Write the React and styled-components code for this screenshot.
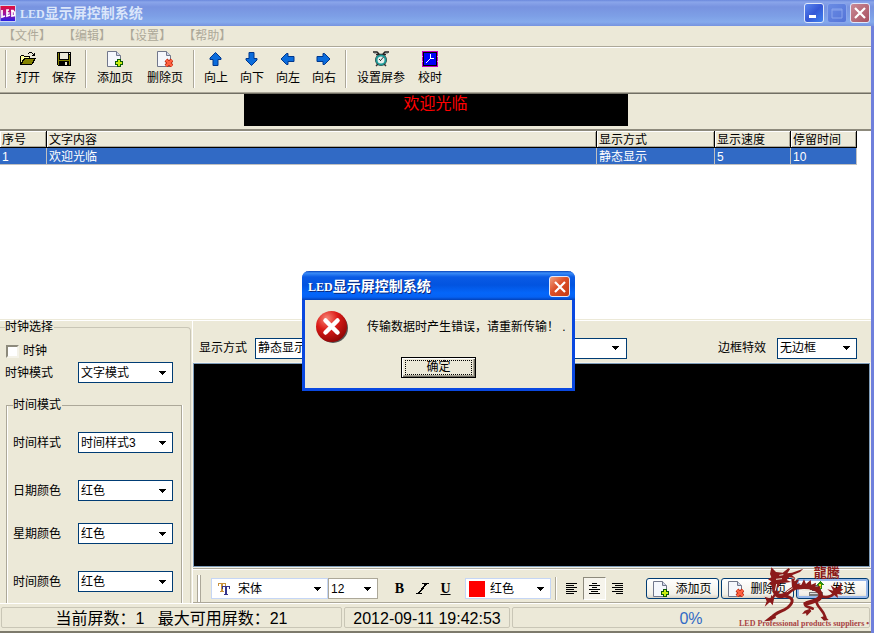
import React from "react";
import styled, { createGlobalStyle } from "styled-components";

const face = "#ece9d8";
const shadow = "#aca899";

const GlobalStyle = createGlobalStyle`
  * {
    box-sizing: border-box;
  }
  body {
    margin: 0;
    background: ${face};
    color: black;
    font: 12px/14px "Liberation Sans", "Noto Sans CJK SC", sans-serif;
  }
  button, select, input {
    font: inherit;
    color: inherit;
    margin: 0;
    padding: 0;
    border-radius: 0;
  }
  button:focus, select:focus {
    outline: none;
  }
`;

const Window = styled.div`
  min-height: 100vh;
  display: flex;
  flex-direction: column;
  position: relative;
`;

const TitleBar = styled.header`
  height: 26px;
  display: flex;
  align-items: center;
  gap: 3px;
  padding-right: 4px;
  background: linear-gradient(#6b88dc, #8aa5ea 2px, #7893e0 7px, #7d9fe6 16px, #85aaec 22px, #7693df);
`;

const Title = styled.h1`
  flex: 1;
  margin: 0;
  font-size: 14px;
  line-height: 20px;
  font-weight: bold;
  color: ${p => p.$color || "#dbe6fa"};
  text-shadow: ${p => (p.$deep ? "1px 1px #0a2a80" : "none")};
`;

const Latin = styled.span`
  font-family: "Liberation Serif", serif;
  font-size: 12px;
`;

const frames = {
  minimize: "linear-gradient(135deg, #5b87ee, #3558d6 50%, #3f82ee)",
  maximize: "linear-gradient(135deg, #6a8ce4, #5474d8)",
  close: "linear-gradient(135deg, #c98a96, #a8505f)",
  alert: "linear-gradient(135deg, #f0a080, #dc4f28 45%, #c43a14)"
};

const FrameButton = styled.button`
  width: ${p => p.$size || 20}px;
  height: ${p => p.$size || 20}px;
  flex: none;
  display: flex;
  align-items: center;
  justify-content: center;
  border: 1px solid ${p => (p.$kind === "maximize" ? "#8aa6ec" : "#dfe8fb")};
  border-radius: 3px;
  background: ${p => frames[p.$kind]};
`;

const Client = styled.div`
  flex: 1;
  display: flex;
  flex-direction: column;
  border-right: 3px solid #6f80dc;
`;

const MenuBar = styled.nav`
  height: 21px;
  display: flex;
  gap: 12px;
  padding: 0 3px;
  border-bottom: 1px solid ${shadow};
  box-shadow: 0 1px white;
`;

const MenuItem = styled.button`
  border: none;
  background: none;
  color: ${shadow};
  line-height: 16px;
`;

const ToolBar = styled.div`
  display: flex;
  gap: 3px;
  height: 46px;
  padding: 3px 5px 4px;
  border-bottom: 1px solid ${shadow};
`;

const Separator = styled.span`
  width: 2px;
  margin-right: ${p => p.$space || 0}px;
  border-left: 1px solid ${shadow};
  border-right: 1px solid white;
`;

const ToolGroup = styled.div`
  display: flex;
`;

const ToolButton = styled.button`
  width: ${p => p.$width}px;
  display: flex;
  flex-direction: column;
  align-items: center;
  gap: 4px;
  padding-top: 1px;
  border: none;
  background: none;
  white-space: nowrap;
`;

const PreviewStrip = styled.div`
  height: 38px;
  padding-bottom: 4px;
  border-top: 1px solid #716f64;
  border-bottom: 2px solid #8d8a7c;
`;

const PreviewScreen = styled.div`
  width: 384px;
  max-width: 100%;
  height: 32px;
  margin: 0 auto;
  background: black;
  color: red;
  font: 16px/16px "Noto Sans CJK SC", sans-serif;
  text-align: center;
`;

const ListArea = styled.div`
  flex: 1;
  min-height: 100px;
  padding-right: 14px;
  background: white;
  border-bottom: 1px solid ${face};
  box-shadow: 0 1px white;
`;

const List = styled.table`
  width: 100%;
  table-layout: fixed;
  border-collapse: separate;
  border-spacing: 0;
`;

const HeadCell = styled.th`
  width: ${p => (p.$width ? p.$width + "px" : "auto")};
  height: 17px;
  padding: 2px 2px 0;
  background: ${face};
  border-right: 1px solid black;
  border-bottom: 1px solid black;
  box-shadow: inset 1px 1px white, inset -1px -1px ${shadow};
  font-weight: normal;
  text-align: left;
`;

const Cell = styled.td`
  height: 17px;
  padding: 2px 2px 0;
  background: #316ac5;
  border-right: 1px solid #c0c0c0;
  border-bottom: 1px solid #c0c0c0;
  color: white;
`;

const Lower = styled.div`
  display: grid;
  grid-template-columns: 191px minmax(0, 1fr);
`;

const ClockGroup = styled.fieldset`
  min-width: 0;
  margin: 0;
  padding: 10px 8px 0 5px;
  border: 1px solid #c9c6b6;
  border-left: none;
  border-bottom: none;
  border-top-right-radius: 4px;

  legend {
    padding: 0 1px 0 0;
  }
`;

const TimeGroup = styled.fieldset`
  min-width: 0;
  margin: 15px 0 0 1px;
  padding: 20px 0 11px 6px;
  border: 1px solid ${shadow};
  border-bottom: none;
  box-shadow: 1px 0 white, inset 1px 0 white;

  legend {
    padding: 0 1px 0 0;
  }
`;

const Field = styled.div`
  display: flex;
  align-items: center;
  margin-top: ${p => p.$space || 0}px;

  label {
    width: ${p => p.$label}px;
  }
`;

const CheckRow = styled.label`
  display: flex;
  align-items: center;
  gap: 4px;
  height: 14px;
  padding-left: 1px;
`;

const CheckBox = styled.input`
  appearance: none;
  width: 13px;
  height: 13px;
  background: white;
  border: 2px solid;
  border-color: #8d8a7c #f4f2e8 #f4f2e8 #8d8a7c;
`;

const SelectBox = styled.span`
  display: grid;
  grid-template-columns: ${p => p.$icon || 0}px 1fr 20px;
  align-items: center;
  width: ${p => p.$width}px;
  height: 21px;
  flex: none;
  background: white;
  border: 1px solid ${p => p.$border || "#003c74"};

  select {
    grid-area: 1 / 1 / 2 / 4;
    height: 100%;
    min-width: 0;
    appearance: none;
    border: none;
    background: none;
    padding-left: ${p => (p.$icon || 0) + 2}px;
  }
  svg {
    pointer-events: none;
    justify-self: center;
  }
  svg:last-child {
    grid-area: 1 / 3;
  }
  select + svg:not(:last-child) {
    grid-area: 1 / 1;
  }
`;

const Editor = styled.div`
  display: flex;
  flex-direction: column;
  margin-left: 1px;
  border-left: 1px solid white;
`;

const EffectRow = styled.div`
  height: 43px;
  display: flex;
  align-items: center;
  padding: 13px 14px 0 6px;
`;

const EffectField = styled.div`
  display: flex;
  align-items: center;
  gap: ${p => p.$gap || 0}px;
  margin-left: ${p => p.$left || 0};
`;

const Canvas = styled.div`
  flex: 1;
  margin-right: 1px;
  background: black;
  border: 1px solid #7f9db9;
  outline: 1px solid #f4f2e8;
`;

const FormatBar = styled.div`
  height: 35px;
  display: flex;
  align-items: center;
  margin-top: 1px;
  padding: 6px 2px 0 4px;
  border-top: 1px solid ${shadow};
  border-bottom: 1px solid ${shadow};
  box-shadow: inset 0 1px white;
`;

const Grip = styled.span`
  align-self: stretch;
  width: 4px;
  margin-right: 10px;
  border-left: 1px solid ${shadow};
  border-right: 1px solid ${shadow};
  background: white;
`;

const FormatGroup = styled.div`
  display: flex;
  margin: 0 8px 0 ${p => p.$left}px;
`;

const FormatButton = styled.button`
  width: 23px;
  height: 23px;
  display: flex;
  align-items: center;
  justify-content: center;
  border: 1px solid;
  border-color: ${p => (p.$pressed ? "#8d8a7c white white #8d8a7c" : "transparent")};
  background: ${p => (p.$pressed ? "#f6f4ec" : "none")};
  font: ${p => (p.$italic ? "italic" : "normal")} bold 14px/18px "Liberation Serif", serif;
  text-decoration: ${p => (p.$underline ? "underline" : "none")};
`;

const Actions = styled.div`
  display: flex;
  gap: 2px;
  margin-left: auto;
`;

const ActionButton = styled.button`
  width: 73px;
  height: 21px;
  display: flex;
  align-items: center;
  justify-content: center;
  gap: 6px;
  border: 1px solid #003c74;
  border-radius: 3px;
  background: linear-gradient(white, #f2f0e8 80%, #d8d2c4);
  box-shadow: ${p => (p.$primary ? "inset 0 0 0 2px #98b8ea" : "none")};
  white-space: nowrap;
`;

const StatusBar = styled.footer`
  height: 30px;
  display: flex;
  gap: 2px;
  padding: 3px 1px 3px 1px;
  border-top: 1px solid white;
  border-bottom: 2px solid #7d7a6c;
  font-size: 16px;
  line-height: 22px;
  text-align: center;
  white-space: pre;
`;

const StatusPanel = styled.div`
  flex: ${p => (p.$width ? `0 0 ${p.$width}px` : "1")};
  border: 1px solid #c9c6b6;
  border-radius: 2px;
  color: ${p => p.$color || "black"};
`;

const Brand = styled.div`
  position: absolute;
  right: 4px;
  bottom: 4px;
  width: 131px;
  color: #8b1a1a;
  pointer-events: none;

  svg {
    display: block;
    margin: 0 0 -5px 21px;
  }
`;

const Slogan = styled.div`
  font: bold 8px/10px "Liberation Serif", serif;
  color: #a84444;
  white-space: nowrap;
`;

const Overlay = styled.div`
  position: absolute;
  inset: 0;
  display: flex;
  align-items: center;
  justify-content: center;
  padding: 29px 0 0 3px;
`;

const Dialog = styled.section`
  width: 273px;
  background: ${face};
  border: 3px solid #0a48e0;
  border-top: none;
  border-radius: 7px 7px 0 0;
`;

const DialogTitle = styled.header`
  height: 29px;
  display: flex;
  align-items: center;
  margin: 0 -3px;
  padding: 2px 5px 0 6px;
  border-radius: 7px 7px 0 0;
  background: linear-gradient(#0842b8, #3a8cf8 2px, #0a5ae4 6px, #0254e0 14px, #0466fa 22px, #0562f4 26px, #0341b8);
`;

const Message = styled.div`
  display: flex;
  align-items: center;
  gap: 18px;
  padding: 10px 0 0 10px;

  p {
    margin: 0;
    white-space: nowrap;
  }
`;

const OkButton = styled.button`
  display: block;
  width: 75px;
  height: 21px;
  margin: 13px auto 10px;
  padding: 1px;
  border: 1px solid black;
  background: ${face};
  box-shadow: inset 1px 1px white, inset -1px -1px #716f64, inset -2px -2px ${shadow};

  span {
    display: block;
    margin: 1px 2px;
    border: 1px dotted black;
    line-height: 13px;
  }
`;

const Arrow = () => (
  <svg width="7" height="4" viewBox="0 0 7 4" shapeRendering="crispEdges" aria-hidden="true">
    <path d="M0 0h7v1H6v1H5v1H4v1H3V3H2V2H1V1H0z" />
  </svg>
);

const Pixels = ({ children, size = 16 }) => (
  <svg width={size} height={size} viewBox="0 0 16 16" shapeRendering="crispEdges" aria-hidden="true">
    {children}
  </svg>
);

const OpenIcon = () => (
  <Pixels>
    <path d="M1 4h3v1h6v2H4v2H3v2H2v2H0V5h1z" />
    <path d="M1 5h3v1h5v1H4v2H3v2H2v1H1z" fill="#ffff9c" />
    <path d="M4 7h12v1h-1v2h-1v2h-1v1h-1v1H0v-1h1v-2h1V9h1V8h1z" />
    <path d="M5 8h9v1h-1v2h-1v2H2v-1h1v-2h1V9h1z" fill="#848200" />
    <path d="M9 1h3v1h1v1h1V2h1v3h-3V4h1V3h-1V2H9v1H8V2h1z" />
  </Pixels>
);

const SaveIcon = () => (
  <Pixels>
    <path d="M1 1h14v14H2v-1H1z" />
    <path d="M2 2h1v12H2zM13 4h1v10h-1zM3 9h10v1H3z" fill="#848200" />
    <path d="M4 2h8v6H4z" fill="#ece9d8" />
    <path d="M9 11h2v3H9z" fill="#ece9d8" />
    <path d="M13 2h1v1h-1z" fill="#fff" />
  </Pixels>
);

const PageIcon = ({ remove }) => (
  <svg width="16" height="16" viewBox="0 0 16 16" aria-hidden="true">
    <path d="M.5.5h9l4 4v11H.5z" fill="#f5f7fc" stroke="#71778b" />
    <path d="M9.500 .5v4h4" fill="#cfd5e8" stroke="#71778b" />
    {remove ? (
      <g>
        <path d="M9 9l6 6m0-6l-6 6" stroke="#a81c04" strokeWidth="4" />
        <path d="M9 9l6 6m0-6l-6 6" stroke="#ff6040" strokeWidth="2.500" />
      </g>
    ) : (
      <g>
        <path d="M12 8v8M8 12h8" stroke="#0b5a08" strokeWidth="4" />
        <path d="M12 9v6M9 12h6" stroke="#c8ee10" strokeWidth="2" />
      </g>
    )}
  </svg>
);

const ArrowIcon = ({ turn }) => (
  <svg width="16" height="16" viewBox="0 0 16 16" aria-hidden="true">
    <path
      d="M7.500 1.500L13 7v1.500h-3v6H5v-6H2V7z"
      transform={`rotate(${turn} 7.500 8)`}
      fill="#0a6cdc"
      stroke="#00378c"
    />
  </svg>
);

const AlarmIcon = () => (
  <svg width="16" height="16" viewBox="0 0 16 16" aria-hidden="true">
    <path d="M0 1h4l2 2M16 1h-4l-2 2M3 3.500h10" fill="none" stroke="#222" strokeWidth="1.500" />
    <path d="M1 2.500h3M12 2.500h3" stroke="#aaa" />
    <circle cx="8" cy="9" r="6" fill="#333" />
    <circle cx="8" cy="9" r="4.500" fill="#e4eeec" stroke="#1c9c98" strokeWidth="2" />
    <path d="M10.500 6L7.500 9.500M6 8l2 2" fill="none" stroke="#333" />
    <path d="M3 15l2-2M13 15l-2-2" stroke="#333" strokeWidth="1.500" />
  </svg>
);

const TimeIcon = () => (
  <Pixels>
    <path d="M0 0h16v16H0z" fill="#c400c4" />
    <path d="M1 1h14v14H1z" fill="#000" />
    <path d="M2 2h12v12H2z" fill="#0000f8" />
    <path d="M8 3v5l4-1M8 8l-4 4" fill="none" stroke="#fff" />
    <path d="M0 5h1v1H0zM0 10h1v1H0zM15 5h1v1h-1zM15 10h1v1h-1z" fill="#ff80ff" />
  </Pixels>
);

const SendIcon = () => (
  <Pixels>
    <path d="M1 4h11v6H1z" fill="#556" />
    <path d="M2 5h9v4H2z" fill="#a8b8c4" />
    <path d="M0 11h14v4H0z" fill="#777" />
    <path d="M1 12h12v1H1z" fill="#ddd" />
    <path d="M11 0l4 4h-2v4H9V4H7z" fill="#2c8a10" />
    <path d="M10 3h2v4h-2z" fill="#f4f010" />
  </Pixels>
);

const FontIcon = () => (
  <svg width="14" height="14" viewBox="0 0 14 14" shapeRendering="crispEdges" aria-hidden="true">
    <path d="M1 1h8v3H8V2H6v7h1v1H3V9h1V2H2v2H1z" fill="#c8923c" />
    <path d="M5 4h8v3h-1V5h-2v7h1v1H7v-1h1V5H6v2H5z" fill="#34348c" />
  </svg>
);

const RedSwatch = () => (
  <svg width="16" height="16" aria-hidden="true">
    <path d="M0 0h16v16H0z" fill="red" />
  </svg>
);

const alignLines = {
  left: "M0 0h11M0 2h8M0 4h11M0 6h8M0 8h11M0 10h8",
  center: "M3 0h5M0 2h11M3 4h5M0 6h11M2 8h7M0 10h11",
  right: "M0 0h11M3 2h8M0 4h11M3 6h8M0 8h11M4 10h7"
};

const AlignIcon = ({ side }) => (
  <svg width="11" height="11" viewBox="0 -.5 11 11" shapeRendering="crispEdges" aria-hidden="true">
    <path d={alignLines[side]} stroke="#000" />
  </svg>
);

const SlantIcon = () => (
  <svg width="13" height="11" viewBox="0 0 13 11" shapeRendering="crispEdges" aria-hidden="true">
    <path d="M6 0h7v1h-2v1h-1v1H9v1H8v2H7v1H6v1H5v1H4v1h2v1H0v-1h2V9h1V8h1V7h1V5h1V4h1V3h1V1H6z" />
  </svg>
);

const ErrorIcon = () => (
  <svg width="34" height="34" viewBox="0 0 34 34" aria-hidden="true">
    <defs>
      <radialGradient id="ball" cx=".35" cy=".25" r=".8">
        <stop offset="0" stopColor="#f88878" />
        <stop offset=".45" stopColor="#dc1c18" />
        <stop offset="1" stopColor="#8c0404" />
      </radialGradient>
    </defs>
    <circle cx="18" cy="18" r="15" fill="#555" />
    <circle cx="16.500" cy="16.500" r="15.500" fill="url(#ball)" />
    <path d="M10.500 10.500l12 12m0-12l-12 12" stroke="#fff" strokeWidth="4.500" strokeLinecap="round" />
  </svg>
);

const Logo = () => (
  <svg width="17" height="17" viewBox="0 0 17 17" aria-hidden="true">
    <defs>
      <linearGradient id="logo" x1="0" y1="0" x2="0" y2="1">
        <stop offset="0" stopColor="#e8102c" />
        <stop offset=".5" stopColor="#a010a0" />
        <stop offset="1" stopColor="#2020e8" />
      </linearGradient>
    </defs>
    <path d="M0 .5h15.500v16H0z" fill="url(#logo)" stroke="#cdd6f4" />
    <path
      d="M2 5v7l3-1M9 5H7v6l3-1M6.500 8h3M11 5.500h2l1.500 2v3L12 11V5.500"
      fill="none"
      stroke="#fff"
      strokeWidth="1.700"
    />
  </svg>
);

const Dragon = () => (
  <svg width="95" height="64" viewBox="0 0 285 192" aria-hidden="true">
    <g fill="currentColor">
      {/* head, horns and whiskers */}
      <path d="M34 22l14 14 20 2 18-14 4 4-8 12 14-2 34-12-10 10-24 10 10 8-18-2-8 8 14 6-18 2-16 2-4 12-12 2-10 8 2-14-8-6 6-8-10-6 10-6-4-10z" />
      {/* mane and back spikes */}
      <path d="M94 58l12-4-4 10 16-6-8 14 12-2-8 10-18 2zM124 74l8-16 6 14 14-12 2 14 14-6-2 12 16-2-4 12-40-8z" />
      {/* claws */}
      <path d="M14 110l18 6 2-12 8 14-4 18-8-10-16 14 6-16zM12 184l20-16 14-2 2 8-18 8zM194 168l12 12-14 2-10-10zM134 152l16-6 4 8-14 14-2-8-12 2z" />
      {/* tail fringe */}
      <path d="M218 102l-16-14 18 4-8-16 16 10 18-18-4 18 8 2-10 8 6 8-14-2 2 12z" />
    </g>
    <g fill="none" stroke="currentColor" strokeLinecap="round">
      <path d="M56 64C38 82 42 108 62 108C84 108 88 84 112 82C150 76 182 88 182 106C180 124 158 122 140 130" strokeWidth="13" />
      <path d="M54 96C40 100 46 112 32 118" strokeWidth="7" />
      <path d="M74 108C102 112 102 126 84 142C66 156 48 156 34 174" strokeWidth="9" />
      <path d="M168 124C176 148 188 146 196 172M134 130C134 144 150 140 158 146" strokeWidth="8" />
      <path d="M182 108C202 116 222 108 226 92" strokeWidth="8" />
    </g>
    <path d="M58 46l12-2M48 58l18-2M50 72L46 92M80 96l18-12M126 90l30 2" stroke="#ece9d8" strokeWidth="3" />
    <text
      x="161"
      y="51"
      fill="currentColor"
      fontFamily="Noto Sans CJK SC, sans-serif"
      fontWeight="bold"
      fontSize="39"
    >
      龍騰
    </text>
  </svg>
);

const CloseMark = () => (
  <svg width="12" height="12" viewBox="0 0 12 12" aria-hidden="true">
    <path d="M1 1l10 10M11 1L1 11" stroke="#fff" strokeWidth="2.200" />
  </svg>
);

const Select = ({ value, icon, id, label, ...box }) => (
  <SelectBox {...box}>
    <select id={id} aria-label={label}>
      <option>{value}</option>
    </select>
    {icon}
    <Arrow />
  </SelectBox>
);

const menus = ["文件", "编辑", "设置", "帮助"];

const tools = [
  [
    { label: "打开", width: 36, icon: <OpenIcon /> },
    { label: "保存", width: 36, icon: <SaveIcon /> }
  ],
  [
    { label: "添加页", width: 50, icon: <PageIcon /> },
    { label: "删除页", width: 50, icon: <PageIcon remove /> }
  ],
  [
    { label: "向上", width: 36, icon: <ArrowIcon turn={0} /> },
    { label: "向下", width: 36, icon: <ArrowIcon turn={180} /> },
    { label: "向左", width: 36, icon: <ArrowIcon turn={270} /> },
    { label: "向右", width: 36, icon: <ArrowIcon turn={90} /> }
  ],
  [
    { label: "设置屏参", width: 62, icon: <AlarmIcon /> },
    { label: "校时", width: 36, icon: <TimeIcon /> }
  ]
];

const columns = [
  { label: "序号", width: 47 },
  { label: "文字内容" },
  { label: "显示方式", width: 118 },
  { label: "显示速度", width: 76 },
  { label: "停留时间", width: 66 }
];

const rows = [["1", "欢迎光临", "静态显示", "5", "10"]];

const timeFields = [
  { id: "time-style", label: "时间样式", value: "时间样式3", space: 0 },
  { id: "date-color", label: "日期颜色", value: "红色", space: 27 },
  { id: "week-color", label: "星期颜色", value: "红色", space: 22 },
  { id: "time-color", label: "时间颜色", value: "红色", space: 27 }
];

export default function App() {
  return (
    <Window>
      <GlobalStyle />
      <TitleBar>
        <Logo />
        <Title>
          <Latin>LED</Latin>显示屏控制系统
        </Title>
        <FrameButton $kind="minimize" aria-label="最小化">
          <svg width="12" height="12" aria-hidden="true">
            <path d="M1 8h7v3H1z" fill="#fff" />
          </svg>
        </FrameButton>
        <FrameButton $kind="maximize" aria-label="最大化" disabled>
          <svg width="12" height="12" aria-hidden="true">
            <path d="M1 2h10v9H1zM1 3h10" fill="none" stroke="#89a4ec" />
          </svg>
        </FrameButton>
        <FrameButton $kind="close" aria-label="关闭">
          <CloseMark />
        </FrameButton>
      </TitleBar>

      <Client>
        <MenuBar>
          {menus.map(name => (
            <MenuItem key={name} disabled>
              【{name}】
            </MenuItem>
          ))}
        </MenuBar>
        <ToolBar>
          {tools.map((group, i) => (
            <React.Fragment key={i}>
              <Separator />
              <ToolGroup>
                {group.map(tool => (
                  <ToolButton key={tool.label} $width={tool.width}>
                    {tool.icon}
                    {tool.label}
                  </ToolButton>
                ))}
              </ToolGroup>
            </React.Fragment>
          ))}
        </ToolBar>
        <PreviewStrip>
          <PreviewScreen>欢迎光临</PreviewScreen>
        </PreviewStrip>

        <ListArea>
          <List>
            <thead>
              <tr>
                {columns.map(col => (
                  <HeadCell key={col.label} $width={col.width}>
                    {col.label}
                  </HeadCell>
                ))}
              </tr>
            </thead>
            <tbody>
              {rows.map(row => (
                <tr key={row[0]}>
                  {row.map((text, i) => (
                    <Cell key={i}>{text}</Cell>
                  ))}
                </tr>
              ))}
            </tbody>
          </List>
        </ListArea>

        <Lower>
          <ClockGroup>
            <legend>时钟选择</legend>
            <CheckRow>
              <CheckBox type="checkbox" />
              时钟
            </CheckRow>
            <Field $label={73} $space={4}>
              <label htmlFor="clock-mode">时钟模式</label>
              <Select id="clock-mode" value="文字模式" $width={95} />
            </Field>
            <TimeGroup>
              <legend>时间模式</legend>
              {timeFields.map(field => (
                <Field key={field.id} $label={65} $space={field.space}>
                  <label htmlFor={field.id}>{field.label}</label>
                  <Select id={field.id} value={field.value} $width={95} />
                </Field>
              ))}
            </TimeGroup>
          </ClockGroup>

          <Editor>
            <EffectRow>
              <EffectField $gap={8}>
                <label htmlFor="show-mode">显示方式</label>
                <Select id="show-mode" value="静态显示" $width={95} />
              </EffectField>
              <EffectField $left="auto">
                <Select label="显示速度" value="" $width={80} />
              </EffectField>
              <EffectField $gap={11} $left="91px">
                <label htmlFor="border-effect">边框特效</label>
                <Select id="border-effect" value="无边框" $width={80} />
              </EffectField>
            </EffectRow>
            <Canvas />
            <FormatBar>
              <Grip />
              <Select
                label="字体"
                value="宋体"
                icon={<FontIcon />}
                $icon={24}
                $width={117}
                $border="#c5d6f5"
              />
              <Select label="字号" value="12" $width={50} $border={shadow} />
              <FormatGroup $left={10}>
                <FormatButton aria-label="加粗">B</FormatButton>
                <FormatButton aria-label="斜体">
                  <SlantIcon />
                </FormatButton>
                <FormatButton $underline aria-label="下划线">
                  U
                </FormatButton>
              </FormatGroup>
              <Select
                label="颜色"
                value="红色"
                icon={<RedSwatch />}
                $icon={22}
                $width={86}
                $border="#c5d6f5"
              />
              <FormatGroup $left={4}>
                <Separator $space={3} />
                {["left", "center", "right"].map(side => (
                  <FormatButton key={side} $pressed={side === "center"} aria-label={side}>
                    <AlignIcon side={side} />
                  </FormatButton>
                ))}
              </FormatGroup>
              <Actions>
                <ActionButton>
                  <PageIcon />
                  添加页
                </ActionButton>
                <ActionButton>
                  <PageIcon remove />
                  删除页
                </ActionButton>
                <ActionButton $primary>
                  <SendIcon />
                  发送
                </ActionButton>
              </Actions>
            </FormatBar>
          </Editor>
        </Lower>

        <StatusBar>
          <StatusPanel $width={341}>{"当前屏数：1   最大可用屏数：21"}</StatusPanel>
          <StatusPanel $width={166}>2012-09-11 19:42:53</StatusPanel>
          <StatusPanel $color="#316ac5">0%</StatusPanel>
        </StatusBar>
      </Client>

      <Brand>
        <Dragon />
        <Slogan>LED Professional products suppliers •</Slogan>
      </Brand>

      <Overlay>
        <Dialog role="alertdialog" aria-labelledby="alert-title">
          <DialogTitle>
            <Title as="h2" id="alert-title" $color="white" $deep>
              <Latin>LED</Latin>显示屏控制系统
            </Title>
            <FrameButton $kind="alert" $size={21} aria-label="关闭">
              <CloseMark />
            </FrameButton>
          </DialogTitle>
          <Message>
            <ErrorIcon />
            <p>传输数据时产生错误，请重新传输！ .</p>
          </Message>
          <OkButton>
            <span>确定</span>
          </OkButton>
        </Dialog>
      </Overlay>
    </Window>
  );
}
